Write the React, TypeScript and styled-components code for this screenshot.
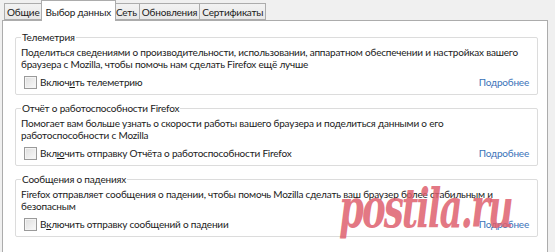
import React from "react";
import styled, { createGlobalStyle } from "styled-components";

const Global = createGlobalStyle`
  html, body { margin: 0; padding: 0; }
  body {
    width: 555px; height: 252px; overflow: hidden;
    background: #f0f0f0;
    font-family: "Lato", "Noto Sans", sans-serif;
    font-size: 10px;
    letter-spacing: -0.2px;
    color: #1a1a1a;
  }
`;

const Window = styled.div`
  position: relative;
  width: 555px;
  height: 252px;
  overflow: hidden;
`;

const TabStrip = styled.div`
  display: flex;
  align-items: flex-end;
  height: 20px;
  padding-left: 4px;
`;

const Tab = styled.div<{ $active?: boolean }>`
  position: relative;
  z-index: ${(p) => (p.$active ? 2 : 1)};
  box-sizing: border-box;
  height: ${(p) => (p.$active ? "21px" : "17px")};
  margin: ${(p) => (p.$active ? "0 -2px -1px -2px" : "0")};
  padding: ${(p) => (p.$active ? "1px 4px 0" : "0 2px")};
  display: flex;
  align-items: center;
  border: 1px solid #acacac;
  border-bottom: ${(p) => (p.$active ? "none" : "1px solid #acacac")};
  margin-left: ${(p) => (p.$active ? "-2px" : "-1px")};
  background: ${(p) => (p.$active ? "#ffffff" : "linear-gradient(#f2f2f2, #e8e8e8)")};
  white-space: nowrap;
  &:first-child { margin-left: 0; }
`;

const Panel = styled.div`
  box-sizing: border-box;
  margin-left: 2px;
  width: 546px;
  height: 240px;
  background: #ffffff;
  border: 1px solid #acacac;
  padding: 9px 9px 0 12px;
  display: flex;
  flex-direction: column;
  gap: 6px;
`;

const Group = styled.fieldset`
  margin: 0;
  padding: 0 8px 4px 5px;
  border: 1px solid #dcdcdc;
  border-radius: 2px;
`;

const Legend = styled.legend`
  padding: 0 1px;
  margin-left: 0;
  line-height: 15px;
`;

const Description = styled.div`
  line-height: 12px;
  margin-top: 1px;
  white-space: nowrap;
`;

const Row = styled.div`
  display: flex;
  align-items: center;
  justify-content: space-between;
  margin-top: 4px;
  height: 16px;
`;

const CheckLabel = styled.label`
  display: flex;
  align-items: center;
  gap: 3px;
  padding-left: 3px;
`;

const Box = styled.span`
  box-sizing: border-box;
  width: 13px;
  height: 13px;
  border: 1px solid #9a9a9a;
  background: linear-gradient(135deg, #dedede, #fafafa);
  box-shadow: inset 0 0 0 1px #f4f4f4;
`;

const Link = styled.span`
  color: #3b73b9;
`;

const Watermark = styled.div`
  position: absolute;
  left: 339px;
  top: 176px;
  font-family: "DejaVu Serif", serif;
  font-style: italic;
  font-weight: bold;
  font-size: 54px;
  line-height: 64px;
  white-space: nowrap;
  color: rgba(222, 95, 110, 0.85);
  letter-spacing: -3px;
  transform: scaleX(0.66);
  transform-origin: left center;
  pointer-events: none;
`;

const U = styled.span`
  text-decoration: underline;
`;

export default function App() {
  return (
    <Window>
      <Global />
      <TabStrip>
        <Tab>Общие</Tab>
        <Tab $active>Выбор данных</Tab>
        <Tab>Сеть</Tab>
        <Tab>Обновления</Tab>
        <Tab>Сертификаты</Tab>
      </TabStrip>
      <Panel>
        <Group>
          <Legend>Телеметрия</Legend>
          <Description>
            Поделиться сведениями о производительности, использовании, аппаратном обеспечении и настройках вашего
            <br />
            браузера с Mozilla, чтобы помочь нам сделать Firefox ещё лучше
          </Description>
          <Row>
            <CheckLabel>
              <Box />
              <span>Включ<U>и</U>ть телеметрию</span>
            </CheckLabel>
            <Link>Подробнее</Link>
          </Row>
        </Group>
        <Group>
          <Legend>Отчёт о работоспособности Firefox</Legend>
          <Description>
            Помогает вам больше узнать о скорости работы вашего браузера и поделиться данными о его
            <br />
            работоспособности с Mozilla
          </Description>
          <Row>
            <CheckLabel>
              <Box />
              <span>Вкл<U>ю</U>чить отправку Отчёта о работоспособности Firefox</span>
            </CheckLabel>
            <Link>Подробнее</Link>
          </Row>
        </Group>
        <Group>
          <Legend>Сообщения о падениях</Legend>
          <Description>
            Firefox отправляет сообщения о падении, чтобы помочь Mozilla сделать ваш браузер более стабильным и
            <br />
            безопасным
          </Description>
          <Row>
            <CheckLabel>
              <Box />
              <span>В<U>к</U>лючить отправку сообщений о падении</span>
            </CheckLabel>
            <Link>Подробнее</Link>
          </Row>
        </Group>
      </Panel>
      <Watermark>postila.ru</Watermark>
    </Window>
  );
}
